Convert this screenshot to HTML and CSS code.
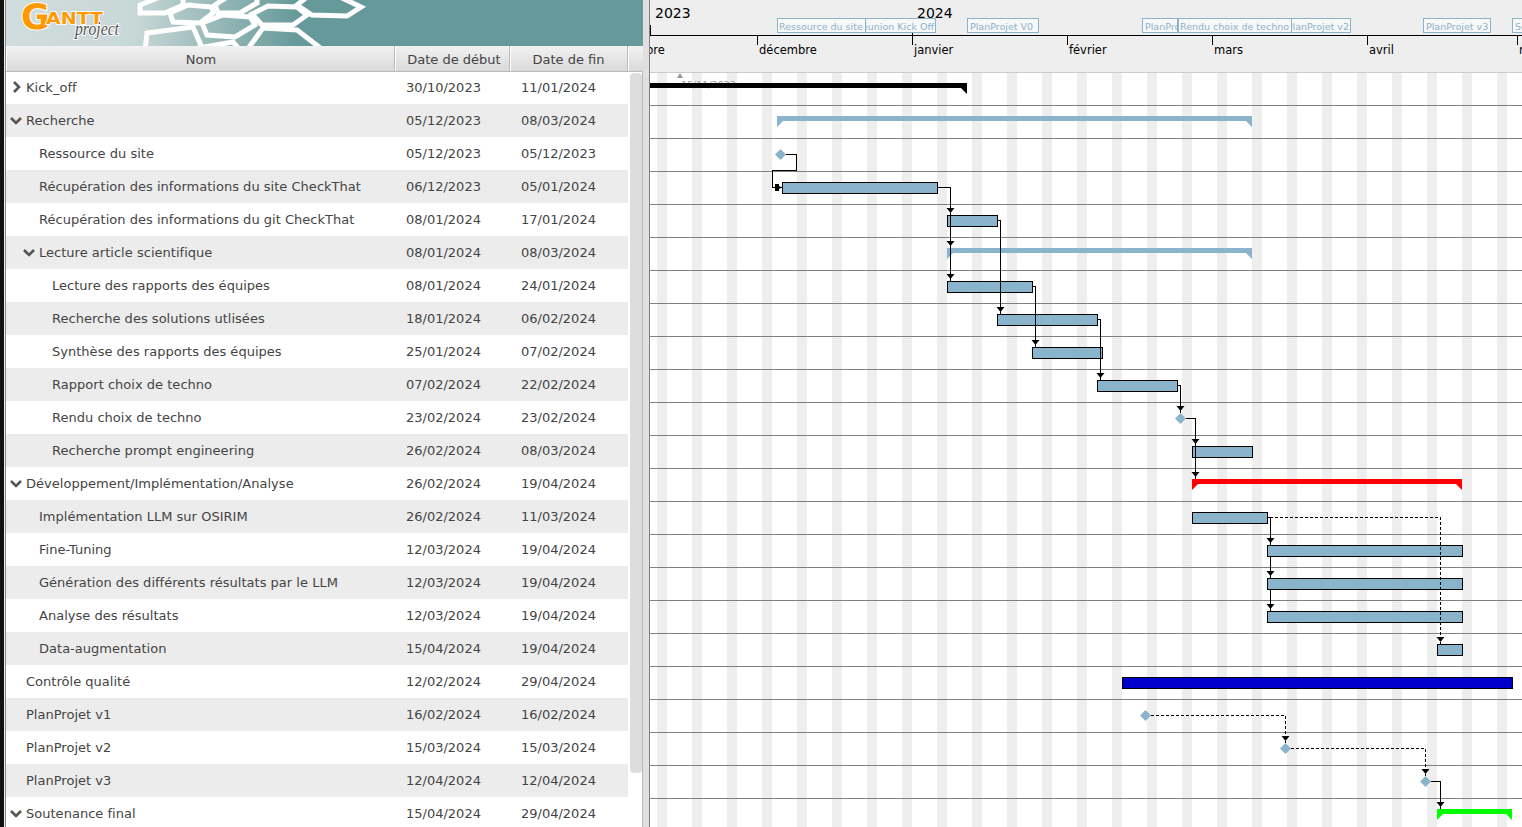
FILE: index.html
```html
<!DOCTYPE html>
<html lang="fr">
<head>
  <meta charset="UTF-8">
  <meta name="viewport" content="width=device-width, initial-scale=1">
  <title>GanttProject</title>
  <link rel="stylesheet" href="styles.css">
</head>
<body>

  <div class="edge"></div>

  <div class="panel">
    <svg class="banner" width="637" height="46" viewBox="6 0 637 46">
      <defs>
        <linearGradient id="banner-bg" x1="0" x2="1" y1="0" y2="0">
          <stop offset="0" stop-color="#d0dddc"/>
          <stop offset="0.2" stop-color="#c8d8d7"/>
          <stop offset="0.46" stop-color="#669999"/>
        </linearGradient>
      </defs>
      <rect x="6" y="0" width="637" height="46" fill="url(#banner-bg)"/>
      <g class="hex">
        <polygon points="145,50 147,33 193,27 203,50"/>
        <polygon points="202,23 223,15 250,17 255,25 235,37 207,35"/>
        <polygon points="252,14 268,6 297,7 307,15 293,25 262,25"/>
        <polygon points="215,5 227,-3 257,-3 257,3 240,13 218,13"/>
        <polygon points="297,5 307,-3 340,-3 361,7 347,16 312,15"/>
        <polygon points="170,13 188,5 212,7 213,13 200,23 173,22"/>
        <polygon points="140,5 160,-3 183,-3 183,5 165,13 140,13"/>
        <polygon points="247,50 263,28 297,30 323,50"/>
        <polygon points="187,50 233,42 240,50"/>
      </g>
      <text class="logo-g" x="21" y="29">G</text>
      <text class="logo-antt" x="46" y="24" textLength="57" lengthAdjust="spacingAndGlyphs">ANTT</text>
      <text class="logo-project" x="75" y="35" textLength="44" lengthAdjust="spacingAndGlyphs">project</text>
    </svg>

    <div class="thead">
      <div class="th th-name">Nom</div>
      <div class="th th-start">Date de début</div>
      <div class="th th-end">Date de fin</div>
      <div class="th th-rest"></div>
    </div>

    <div class="tbody">
      <div class="rows">
        <div class="row lvl0"><span class="name"><svg class="twisty" viewBox="0 0 13 13"><polyline points="4,1 9,6 4,11"/></svg>Kick_off</span><span class="date">30/10/2023</span><span class="date">11/01/2024</span></div>
        <div class="row lvl0"><span class="name"><svg class="twisty" viewBox="0 0 13 13"><polyline points="1,4 6,9 11,4"/></svg>Recherche</span><span class="date">05/12/2023</span><span class="date">08/03/2024</span></div>
        <div class="row lvl1"><span class="name"><span class="twisty"></span>Ressource du site</span><span class="date">05/12/2023</span><span class="date">05/12/2023</span></div>
        <div class="row lvl1"><span class="name"><span class="twisty"></span>Récupération des informations du site CheckThat</span><span class="date">06/12/2023</span><span class="date">05/01/2024</span></div>
        <div class="row lvl1"><span class="name"><span class="twisty"></span>Récupération des informations du git CheckThat</span><span class="date">08/01/2024</span><span class="date">17/01/2024</span></div>
        <div class="row lvl1"><span class="name"><svg class="twisty" viewBox="0 0 13 13"><polyline points="1,4 6,9 11,4"/></svg>Lecture article scientifique</span><span class="date">08/01/2024</span><span class="date">08/03/2024</span></div>
        <div class="row lvl2"><span class="name"><span class="twisty"></span>Lecture des rapports des équipes</span><span class="date">08/01/2024</span><span class="date">24/01/2024</span></div>
        <div class="row lvl2"><span class="name"><span class="twisty"></span>Recherche des solutions utlisées</span><span class="date">18/01/2024</span><span class="date">06/02/2024</span></div>
        <div class="row lvl2"><span class="name"><span class="twisty"></span>Synthèse des rapports des équipes</span><span class="date">25/01/2024</span><span class="date">07/02/2024</span></div>
        <div class="row lvl2"><span class="name"><span class="twisty"></span>Rapport choix de techno</span><span class="date">07/02/2024</span><span class="date">22/02/2024</span></div>
        <div class="row lvl2"><span class="name"><span class="twisty"></span>Rendu choix de techno</span><span class="date">23/02/2024</span><span class="date">23/02/2024</span></div>
        <div class="row lvl2"><span class="name"><span class="twisty"></span>Recherche prompt engineering</span><span class="date">26/02/2024</span><span class="date">08/03/2024</span></div>
        <div class="row lvl0"><span class="name"><svg class="twisty" viewBox="0 0 13 13"><polyline points="1,4 6,9 11,4"/></svg>Développement/Implémentation/Analyse</span><span class="date">26/02/2024</span><span class="date">19/04/2024</span></div>
        <div class="row lvl1"><span class="name"><span class="twisty"></span>Implémentation LLM sur OSIRIM</span><span class="date">26/02/2024</span><span class="date">11/03/2024</span></div>
        <div class="row lvl1"><span class="name"><span class="twisty"></span>Fine-Tuning</span><span class="date">12/03/2024</span><span class="date">19/04/2024</span></div>
        <div class="row lvl1"><span class="name"><span class="twisty"></span>Génération des différents résultats par le LLM</span><span class="date">12/03/2024</span><span class="date">19/04/2024</span></div>
        <div class="row lvl1"><span class="name"><span class="twisty"></span>Analyse des résultats</span><span class="date">12/03/2024</span><span class="date">19/04/2024</span></div>
        <div class="row lvl1"><span class="name"><span class="twisty"></span>Data-augmentation</span><span class="date">15/04/2024</span><span class="date">19/04/2024</span></div>
        <div class="row lvl0"><span class="name"><span class="twisty"></span>Contrôle qualité</span><span class="date">12/02/2024</span><span class="date">29/04/2024</span></div>
        <div class="row lvl0"><span class="name"><span class="twisty"></span>PlanProjet v1</span><span class="date">16/02/2024</span><span class="date">16/02/2024</span></div>
        <div class="row lvl0"><span class="name"><span class="twisty"></span>PlanProjet v2</span><span class="date">15/03/2024</span><span class="date">15/03/2024</span></div>
        <div class="row lvl0"><span class="name"><span class="twisty"></span>PlanProjet v3</span><span class="date">12/04/2024</span><span class="date">12/04/2024</span></div>
        <div class="row lvl0"><span class="name"><svg class="twisty" viewBox="0 0 13 13"><polyline points="1,4 6,9 11,4"/></svg>Soutenance final</span><span class="date">15/04/2024</span><span class="date">29/04/2024</span></div>
      </div>
      <div class="scroll"><div class="thumb"></div></div>
    </div>
  </div>

  <div class="split"></div>

  <div class="chart">
    <!-- le viewBox reprend les coordonnees de la page -->
    <svg class="chart-svg" width="872" height="827" viewBox="650 0 872 827">
      <defs>
        <pattern id="weekend" x="657" y="0" width="35" height="827" patternUnits="userSpaceOnUse">
          <rect width="10" height="827" fill="#eeeeee"/>
        </pattern>
        <polygon id="arrow" points="-3.5,0 4.5,0 0.5,5"/>
        <polygon id="diamond" class="task" points="0,-5.5 5.5,0 0,5.5 -5.5,0"/>
      </defs>

      <!-- entete -->
      <rect x="650" y="0" width="872" height="72" fill="#eeeeee"/>
      <rect x="650" y="72" width="872" height="1" fill="#cccccc"/>
      <text class="year" x="655" y="18">2023</text>
      <text class="year" x="917" y="18">2024</text>
      <path class="tick" d="M650 35H1522M650.5 25V35M912.5 25V45M757.5 35V45M1067.5 35V45M1212.5 35V45M1367.5 35V45M1517.5 35V45"/>

      <g class="month">
        <text x="606.500" y="54">novembre</text>
        <text x="759" y="54">décembre</text>
        <text x="914" y="54">janvier</text>
        <text x="1069" y="54">février</text>
        <text x="1214" y="54">mars</text>
        <text x="1369" y="54">avril</text>
        <text x="1519" y="54">mai</text>
      </g>

      <!-- jalons du haut -->
      <g class="mark">
        <svg x="777" y="18" width="89" height="15"><rect x="0.5" y="0.5" width="88" height="14"/><text x="2" y="12">Ressource du site</text></svg>
        <svg x="865" y="18" width="71" height="15"><rect x="0.5" y="0.5" width="70" height="14"/><text x="69" y="12" text-anchor="end">Réunion Kick Off</text></svg>
        <svg x="967" y="18" width="72" height="15"><rect x="0.5" y="0.5" width="71" height="14"/><text x="3" y="12">PlanProjet V0</text></svg>
        <svg x="1142" y="18" width="36" height="15"><rect x="0.5" y="0.5" width="35" height="14"/><text x="3" y="12">PlanProjet v1</text></svg>
        <svg x="1178" y="18" width="114" height="15"><rect x="0.5" y="0.5" width="113" height="14"/><text x="2" y="12">Rendu choix de techno</text></svg>
        <svg x="1291" y="18" width="60" height="15"><rect x="0.5" y="0.5" width="59" height="14"/><text x="58" y="12" text-anchor="end">PlanProjet v2</text></svg>
        <svg x="1423" y="18" width="68" height="15"><rect x="0.5" y="0.5" width="67" height="14"/><text x="3" y="12">PlanProjet v3</text></svg>
        <svg x="1512" y="18" width="20" height="15"><rect x="0.5" y="0.5" width="19" height="14"/><text x="3" y="12">Soutenance</text></svg>
      </g>

      <!-- grille -->
      <rect x="650" y="73" width="872" height="754" fill="url(#weekend)"/>
      <path class="grid" d="M650 105.500H1522M650 138.500H1522M650 171.500H1522M650 204.500H1522M650 237.500H1522M650 270.500H1522M650 303.500H1522M650 336.500H1522M650 369.500H1522M650 402.500H1522M650 435.500H1522M650 468.500H1522M650 501.500H1522M650 534.500H1522M650 567.500H1522M650 600.500H1522M650 633.500H1522M650 666.500H1522M650 699.500H1522M650 732.500H1522M650 765.500H1522M650 798.500H1522"/>

      <polygon class="today" points="680,73 683,78 677,78"/>
      <text class="today-label" x="681" y="88">15/11/2023</text>

      <!-- barres de resume -->
      <polygon class="sum-black" points="650,83 967,83 967,94 961,88 650,88"/>
      <polygon class="task" points="777,116 1252,116 1252,127 1246,121 783,121 777,127"/>
      <polygon class="task" points="947,248 1252,248 1252,259 1246,253 953,253 947,259"/>
      <polygon class="sum-red" points="1192,479 1462,479 1462,490 1456,484 1198,484 1192,490"/>
      <polygon class="sum-green" points="1437,809 1512,809 1512,820 1506,814 1443,814 1437,820"/>

      <!-- taches -->
      <g class="bars">
        <rect x="782.500" y="182.500" width="155" height="11"/>
        <rect x="947.500" y="215.500" width="50" height="11"/>
        <rect x="947.500" y="281.500" width="85" height="11"/>
        <rect x="997.500" y="314.500" width="100" height="11"/>
        <rect x="1032.500" y="347.500" width="70" height="11"/>
        <rect x="1097.500" y="380.500" width="80" height="11"/>
        <rect x="1192.500" y="446.500" width="60" height="11"/>
        <rect x="1192.500" y="512.500" width="75" height="11"/>
        <rect x="1267.500" y="545.500" width="195" height="11"/>
        <rect x="1267.500" y="578.500" width="195" height="11"/>
        <rect x="1267.500" y="611.500" width="195" height="11"/>
        <rect x="1437.500" y="644.500" width="25" height="11"/>
        <rect class="bar-blue" x="1122.500" y="677.500" width="390" height="11"/>
      </g>

      <use href="#diamond" x="780.500" y="154.500"/>
      <use href="#diamond" x="1180.500" y="418.500"/>
      <use href="#diamond" x="1145.500" y="715.500"/>
      <use href="#diamond" x="1285.500" y="748.500"/>
      <use href="#diamond" x="1425.500" y="781.500"/>

      <!-- dependances -->
      <path class="link" d="M786 154.500H796.500V170.500H772.500V187.500H782M938 187.500H950.500V281M998 220.500H1000.500V314M1033 286.500H1035.500V347M1098 319.500H1100.500V380M1178 385.500H1180.500V413M1186 418.500H1195.500V479M1268 517.500H1270.500V545M1270.500 557V578M1270.500 590V611M1431 781.500H1440.500V809"/>
      <path class="link dashed" d="M1270 517.500H1440.500V644M1151 715.500H1285.500V743M1291 748.500H1425.500V776"/>

      <polygon class="head" points="775,184 779,184 779,186 782,187.500 779,189 779,191 775,191"/>
      <g class="head">
        <use href="#arrow" x="950" y="208"/>
        <use href="#arrow" x="950" y="241"/>
        <use href="#arrow" x="950" y="274"/>
        <use href="#arrow" x="1000" y="307"/>
        <use href="#arrow" x="1035" y="340"/>
        <use href="#arrow" x="1100" y="373"/>
        <use href="#arrow" x="1180" y="406"/>
        <use href="#arrow" x="1195" y="439"/>
        <use href="#arrow" x="1195" y="472"/>
        <use href="#arrow" x="1270" y="538"/>
        <use href="#arrow" x="1270" y="571"/>
        <use href="#arrow" x="1270" y="604"/>
        <use href="#arrow" x="1440" y="637"/>
        <use href="#arrow" x="1285" y="736"/>
        <use href="#arrow" x="1425" y="769"/>
        <use href="#arrow" x="1440" y="802"/>
      </g>
    </svg>
  </div>

</body>
</html>
```

FILE: styles.css
```css
body {
  font-family: 'DejaVu Sans', Verdana, sans-serif;
  font-size: 13px;
  color: #444;
  background-color: #eee;
  margin: 0;
  padding: 0;
  display: flex;
  height: 100vh;
  overflow: hidden;
}

.edge {
  width: 4px;
  flex: none;
  background-color: #111;
  border-right: 1px solid #eee;
}

.panel {
  width: 637px;
  flex: none;
  display: flex;
  flex-direction: column;
  border-left: 1px solid #888;
  background-color: #fff;
}

.banner {
  display: block;
  flex: none;
}

.hex polygon {
  fill: none;
  stroke: #fff;
  stroke-width: 5;
}

.logo-g {
  font-family: 'DejaVu Sans', sans-serif;
  font-weight: bold;
  font-size: 35px;
  fill: #ff9900;
  stroke: #fff;
  stroke-width: 2px;
  paint-order: stroke;
}

.logo-antt {
  font-family: 'DejaVu Sans', sans-serif;
  font-weight: bold;
  font-size: 16px;
  fill: #ff9900;
  stroke: #fff;
  stroke-width: 1.5px;
  paint-order: stroke;
}

.logo-project {
  font-family: 'Liberation Serif', serif;
  font-style: italic;
  font-size: 18px;
  fill: #555;
  stroke: #fff;
  stroke-width: 2px;
  paint-order: stroke;
}

.thead {
  display: flex;
  flex: none;
  height: 25px;
  border-bottom: 1px solid #bbb;
  background: linear-gradient(#f2f2f2, #d9d9d9);
}

.th {
  display: flex;
  align-items: center;
  justify-content: center;
  padding-top: 2px;
  box-sizing: border-box;
  border-right: 1px solid #bbb;
  box-shadow: inset 1px 0 0 #fff;
}

.th-name { width: 389px; padding-left: 2px; }
.th-start { width: 115px; padding-left: 4px; }
.th-end { width: 118px; }
.th-rest { flex: 1; border-right: none; }

.tbody {
  display: flex;
  flex: 1;
  min-height: 0;
  overflow: hidden;
}

.rows {
  width: 622px;
  flex: none;
  margin-top: -1px;
}

.row {
  display: flex;
  align-items: center;
  height: 33px;
}

.row:nth-child(even) {
  background-color: #ececec;
}

.name {
  width: 389px;
  flex: none;
  box-sizing: border-box;
  display: flex;
  align-items: center;
  white-space: nowrap;
  letter-spacing: 0.02px;
}

.lvl0 .name { padding-left: 4px; }
.lvl1 .name { padding-left: 17px; }
.lvl2 .name { padding-left: 30px; }

.twisty {
  width: 13px;
  height: 13px;
  flex: none;
  margin-right: 3px;
  fill: none;
  stroke: #555;
  stroke-width: 2.6;
}

.date {
  width: 115px;
  flex: none;
  box-sizing: border-box;
  padding-left: 11px;
}

.scroll {
  flex: 1;
  padding: 1px 0 0 2px;
  border-right: 1px solid #bbb;
}

.thumb {
  width: 12px;
  height: 700px;
  background-color: #ddd;
  border-radius: 4px;
}

.split {
  width: 6px;
  flex: none;
  background-color: #e0e0e0;
  border-right: 1px solid #808080;
}

.chart {
  flex: 1;
  min-width: 0;
  overflow: hidden;
  background-color: #fff;
}

.chart-svg {
  display: block;
}

.year {
  font-size: 14px;
  fill: #000;
}

.month text {
  font-size: 11.5px;
  fill: #000;
}

.tick {
  fill: none;
  stroke: #000;
  stroke-width: 1;
  shape-rendering: crispEdges;
}

.mark rect {
  fill: #f8f8f8;
  stroke: #8ab3cc;
  stroke-width: 1;
  shape-rendering: crispEdges;
}

.mark text {
  font-size: 9.5px;
  fill: #8ab3cc;
}

.grid {
  fill: none;
  stroke: #808080;
  stroke-width: 1;
  shape-rendering: crispEdges;
}

.today { fill: #999; }

.today-label {
  font-size: 9.5px;
  fill: #999;
}

.task { fill: #8ab3cc; }
.sum-black { fill: #000; }
.sum-red { fill: #ff0000; }
.sum-green { fill: #00ff00; }

.bars rect {
  fill: #8ab3cc;
  stroke: #000;
  stroke-width: 1;
  shape-rendering: crispEdges;
}

.bars .bar-blue {
  fill: #0000cc;
}

.link {
  fill: none;
  stroke: #000;
  stroke-width: 1;
  shape-rendering: crispEdges;
}

.dashed {
  stroke-dasharray: 3 2;
}

.head { fill: #000; }
```
